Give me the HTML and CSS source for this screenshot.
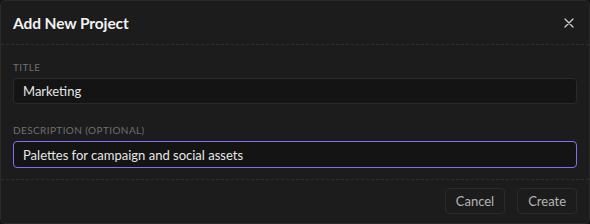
FILE: index.html
```html
<!DOCTYPE html>
<html lang="en">
<head>
    <meta charset="UTF-8">
    <title>Add New Project</title>
    <link rel="stylesheet" href="styles.css">
</head>
<body>
    <div class="modal">
        <div class="modal-head">
            <h2>Add New Project</h2>
            <button class="close" aria-label="Close">
                <svg width="10" height="10" viewBox="0 0 10 10"><path d="M1 1L9 9M9 1L1 9" stroke="#cfcfcf" stroke-width="1.3" stroke-linecap="round"/></svg>
            </button>
        </div>
        <div class="modal-body">
            <label class="field">
                <span class="label">Title</span>
                <input type="text" value="Marketing">
            </label>
            <label class="field">
                <span class="label">Description (optional)</span>
                <input type="text" class="focus" value="Palettes for campaign and social assets">
            </label>
        </div>
        <div class="modal-foot">
            <button class="btn">Cancel</button>
            <button class="btn">Create</button>
        </div>
    </div>
</body>
</html>
```

FILE: styles.css
```css
* {
    margin: 0;
    padding: 0;
    box-sizing: border-box;
}
body {
    background: #151515;
    font-family: Lato, "Noto Sans", sans-serif;
}
.modal {
    width: 590px;
    height: 224px;
    display: flex;
    flex-direction: column;
    background: #1c1c1c;
    border: 1px solid #2a2a2a;
    border-radius: 6px;
}
.modal-head {
    height: 44px;
    display: flex;
    align-items: center;
    justify-content: space-between;
    padding: 0 14px 0 12px;
    border-bottom: 1px dashed #2e2e2e;
}
.modal-head h2 {
    font-size: 15.5px;
    font-weight: 700;
    letter-spacing: -0.1px;
    color: #f2f2f2;
}
.close {
    background: none;
    border: none;
    width: 12px;
    height: 12px;
    display: flex;
    align-items: center;
    justify-content: center;
}
.modal-body {
    flex: 1;
    padding: 16px 12px 0;
    display: flex;
    flex-direction: column;
    gap: 20px;
}
.field {
    display: flex;
    flex-direction: column;
    gap: 4px;
}
.label {
    font-size: 10px;
    line-height: 13px;
    letter-spacing: 0.4px;
    text-transform: uppercase;
    color: #6f6f6f;
}
.field input {
    height: 26px;
    padding: 0 9px;
    background: #141414;
    border: 1px solid #2a2a2a;
    border-radius: 4px;
    color: #e6e6e6;
    font-family: inherit;
    font-size: 13px;
    outline: none;
}
.field input.focus {
    height: 27px;
    border-color: #8a6cf2;
}
.modal-foot {
    height: 44px;
    display: flex;
    align-items: center;
    justify-content: flex-end;
    gap: 12px;
    padding: 0 12px 2px;
    border-top: 1px dashed #2e2e2e;
}
.btn {
    height: 26px;
    padding: 0 10px;
    background: transparent;
    border: 1px solid #2a2a2a;
    border-radius: 4px;
    color: #b5b5b5;
    font-family: inherit;
    font-size: 13px;
}
```
